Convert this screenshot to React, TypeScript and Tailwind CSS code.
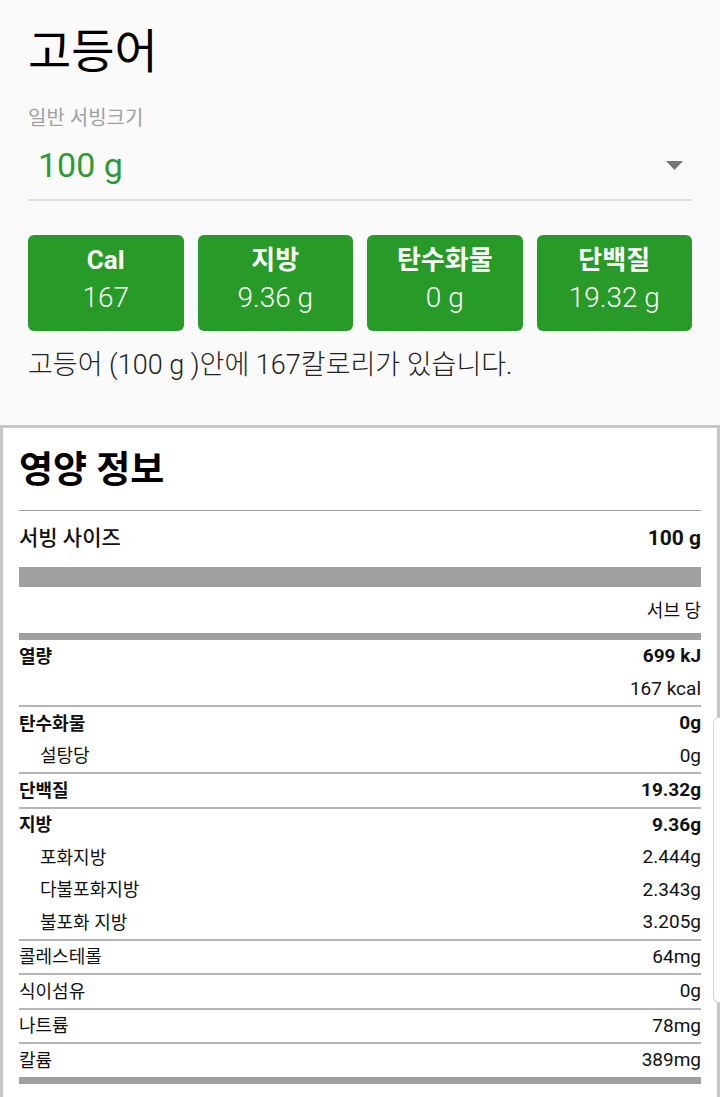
const font = { fontFamily: '"Roboto", "Noto Sans CJK KR", sans-serif' };

type Row = { label: string; value: string; bold?: boolean; sub?: boolean };

const groups: Row[][] = [
  [
    { label: '열량', value: '699 kJ', bold: true },
    { label: '', value: '167 kcal' },
  ],
  [
    { label: '탄수화물', value: '0g', bold: true },
    { label: '설탕당', value: '0g', sub: true },
  ],
  [{ label: '단백질', value: '19.32g', bold: true }],
  [
    { label: '지방', value: '9.36g', bold: true },
    { label: '포화지방', value: '2.444g', sub: true },
    { label: '다불포화지방', value: '2.343g', sub: true },
    { label: '불포화 지방', value: '3.205g', sub: true },
  ],
  [{ label: '콜레스테롤', value: '64mg' }],
  [{ label: '식이섬유', value: '0g' }],
  [{ label: '나트륨', value: '78mg' }],
  [{ label: '칼륨', value: '389mg' }],
];

const macros = [
  { label: 'Cal', value: '167' },
  { label: '지방', value: '9.36 g' },
  { label: '탄수화물', value: '0 g' },
  { label: '단백질', value: '19.32 g' },
];

function NutrientRow({ row }: { row: Row }) {
  return (
    <div className="h-[32.5px] flex items-center justify-between text-[#111]">
      <span className={`text-[18px] ${row.bold ? 'font-bold' : ''} ${row.sub ? 'pl-[21px]' : ''}`}>{row.label}</span>
      <span className={`text-[19px] ${row.bold ? 'font-bold' : ''}`}>{row.value}</span>
    </div>
  );
}

export default function App() {
  return (
    <div className="w-[720px] h-[1097px] overflow-hidden bg-[#fafafa] relative" style={font}>
      <div className="px-[28px] pt-[22px] h-[425px]">
        <h1 className="text-[47px] leading-[60px] text-black">고등어</h1>
        <div className="mt-[24px] text-[20px] leading-[24px] text-[#a0a0a0]">일반 서빙크기</div>
        <div className="mt-[1px] h-[70px] flex items-center justify-between border-b-2 border-[#dcdcdc]">
          <span className="pl-[10px] text-[34px] text-[#2f9a34]">100 g</span>
          <svg width="17" height="9" viewBox="0 0 17 9" className="mr-[9px]">
            <path d="M0 0 L17 0 L8.5 9 Z" fill="#757575" />
          </svg>
        </div>
        <div className="mt-[34px] grid grid-cols-4 gap-[14px]">
          {macros.map((m) => (
            <div key={m.label} className="h-[96px] rounded-[6px] bg-[#289a28] flex flex-col items-center pt-[10px] text-white">
              <span className="text-[26px] leading-[30px] font-bold">{m.label}</span>
              <span className="mt-[5px] text-[28px] leading-[36px] font-light">{m.value}</span>
            </div>
          ))}
        </div>
        <p className="mt-[14px] text-[27px] leading-[40px] text-[#222] font-light">
          고등어 (100 g )안에 167칼로리가 있습니다.
        </p>
      </div>

      <div className="bg-white border-t-[3px] border-x-[3px] border-[#c6c6c6] px-[16px]">
        <h2 className="h-[82px] flex items-center pt-[4px] text-[37px] font-bold text-black">영양 정보</h2>
        <div className="h-px bg-[#999]" />
        <div className="h-[56px] flex items-center justify-between text-[21px] text-[#111]">
          <span className="font-medium">서빙 사이즈</span>
          <span className="font-bold">100 g</span>
        </div>
        <div className="h-[20px] bg-[#a0a0a0]" />
        <div className="h-[46px] flex items-center justify-end text-[18px] text-[#111]">서브 당</div>
        <div className="h-[7px] bg-[#a0a0a0]" />
        {groups.map((g, i) => (
          <div key={i}>
            {i > 0 && <div className="h-[2px] bg-[#b4b4b4]" />}
            {g.map((r, j) => (
              <NutrientRow key={j} row={r} />
            ))}
          </div>
        ))}
        <div className="h-[7px] bg-[#a0a0a0]" />
        <div className="h-[20px]" />
      </div>

      <div className="absolute right-0 top-[717px] w-[7px] h-[286px] rounded-l-[6px] border border-r-0 border-[#d4d4d4] bg-white" />
    </div>
  );
}
